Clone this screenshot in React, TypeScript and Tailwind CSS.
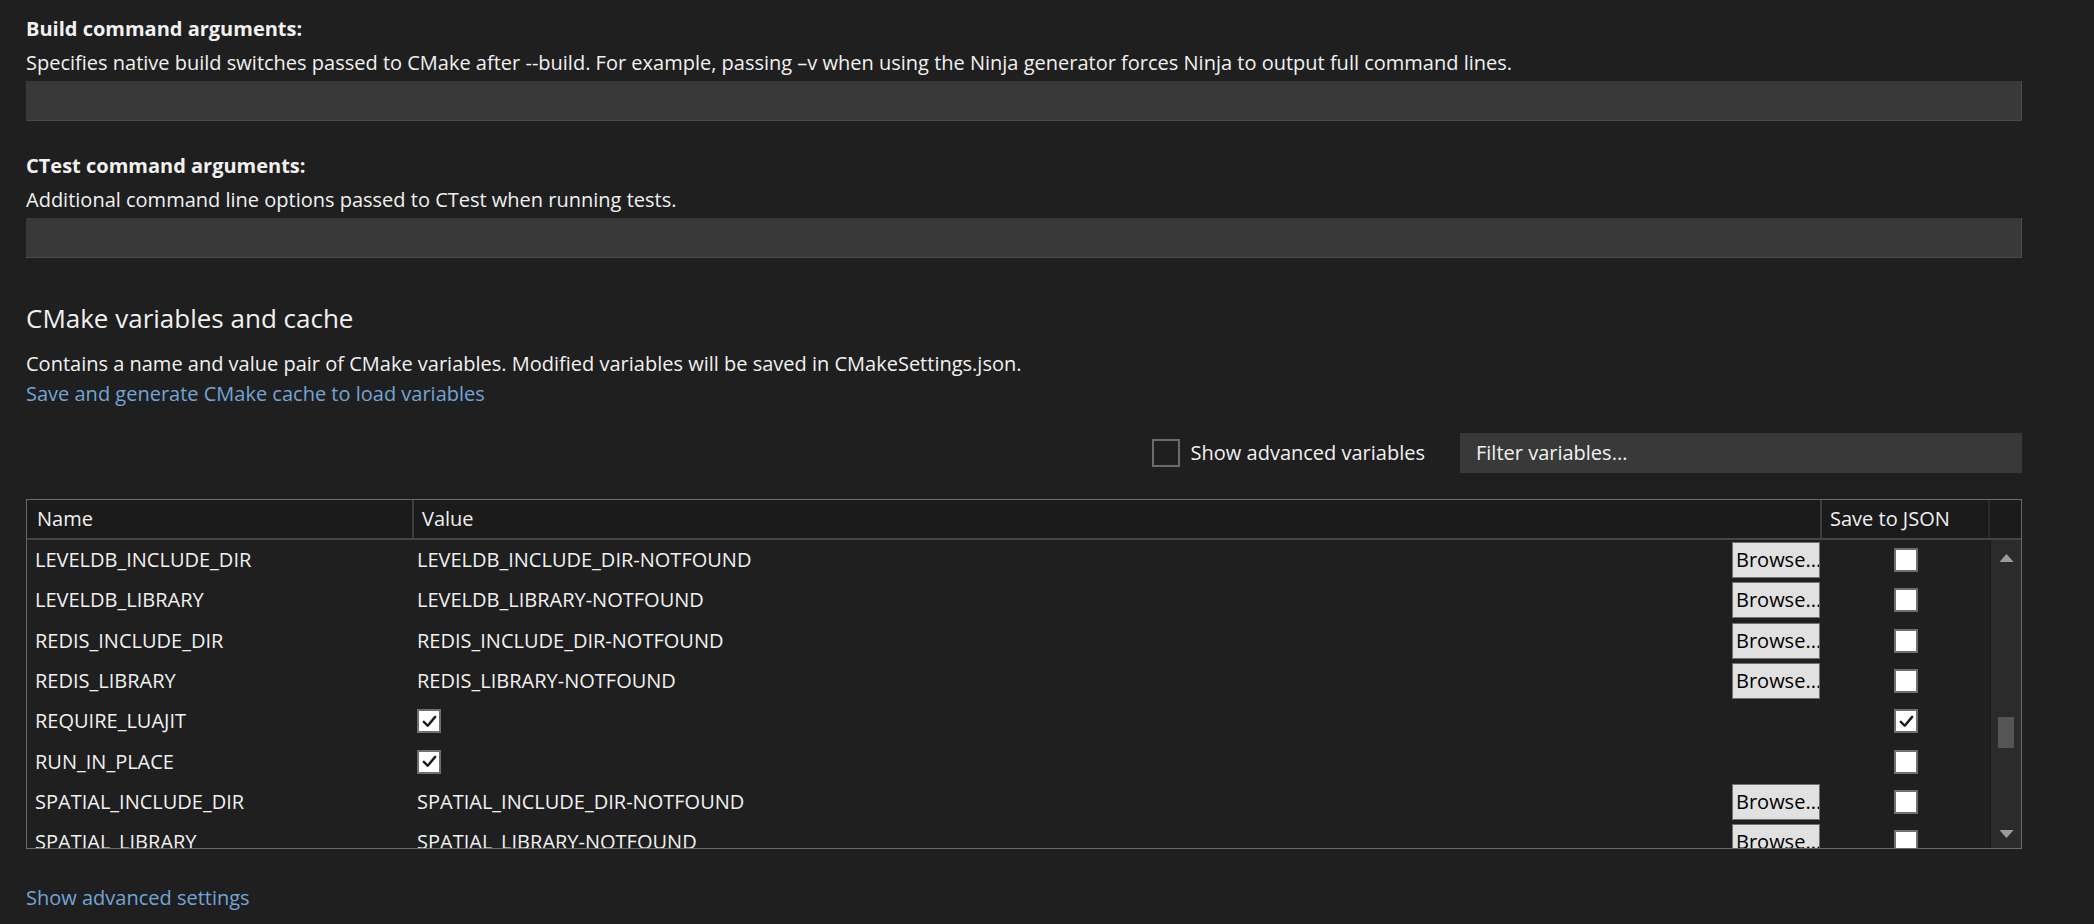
import React from "react";

type Row = {
  name: string;
  value?: string;
  bool?: boolean;
  save?: boolean;
};

const rows: Row[] = [
  { name: "LEVELDB_INCLUDE_DIR", value: "LEVELDB_INCLUDE_DIR-NOTFOUND" },
  { name: "LEVELDB_LIBRARY", value: "LEVELDB_LIBRARY-NOTFOUND" },
  { name: "REDIS_INCLUDE_DIR", value: "REDIS_INCLUDE_DIR-NOTFOUND" },
  { name: "REDIS_LIBRARY", value: "REDIS_LIBRARY-NOTFOUND" },
  { name: "REQUIRE_LUAJIT", bool: true, save: true },
  { name: "RUN_IN_PLACE", bool: true },
  { name: "SPATIAL_INCLUDE_DIR", value: "SPATIAL_INCLUDE_DIR-NOTFOUND" },
  { name: "SPATIAL_LIBRARY", value: "SPATIAL_LIBRARY-NOTFOUND" },
];

function Check() {
  return (
    <svg viewBox="0 0 24 24" className="w-[17px] h-[17px]">
      <path d="M4 12.5 L9.5 18 L20 5.5" fill="none" stroke="#1a1a1a" strokeWidth="3.4" strokeLinecap="round" strokeLinejoin="round" />
    </svg>
  );
}

function Box({ checked }: { checked?: boolean }) {
  return (
    <div className="w-[24px] h-[24px] bg-white border-2 border-[#6f6f6f] flex items-center justify-center">
      {checked && <Check />}
    </div>
  );
}

function Field() {
  return <div className="h-[40px] w-full bg-[#393939] border-b border-r border-[#4a4a4a]" />;
}

function Section({ title, desc }: { title: string; desc: string }) {
  return (
    <div>
      <div className="font-bold h-[28px] leading-[28px]">{title}</div>
      <div className="mt-[6px] h-[28px] leading-[28px]">{desc}</div>
      <div className="mt-[4px]">
        <Field />
      </div>
    </div>
  );
}

export default function App() {
  return (
    <div className="min-h-screen w-full bg-[#1f1f1f] text-[#f1f1f1] font-['Open_Sans','Noto_Sans',sans-serif] text-[20px] px-[26px] pt-[15px]">
      <div className="w-[1996px]">
        <Section
          title="Build command arguments:"
          desc="Specifies native build switches passed to CMake after --build. For example, passing –v when using the Ninja generator forces Ninja to output full command lines."
        />
        <div className="mt-[31px]">
          <Section
            title="CTest command arguments:"
            desc="Additional command line options passed to CTest when running tests."
          />
        </div>

        {/* CMAKE VARIABLES */}
        <div className="mt-[42px] text-[26px] h-[36px] leading-[36px]">CMake variables and cache</div>
        <div className="mt-[13px] h-[30px] leading-[30px]">
          Contains a name and value pair of CMake variables. Modified variables will be saved in CMakeSettings.json.
        </div>
        <div className="h-[30px] leading-[30px] text-[#71a5d8]">Save and generate CMake cache to load variables</div>

        <div className="mt-[24px] flex items-center justify-end">
          <div className="w-[28px] h-[28px] border-2 border-[#6b6b6b]" />
          <span className="ml-[11px]">Show advanced variables</span>
          <div className="ml-[35px] w-[562px] h-[40px] bg-[#393939] flex items-center px-[16px]">Filter variables...</div>
        </div>

        {/* TABLE */}
        <div className="mt-[26px] border border-[#686868] h-[350px] flex flex-col overflow-hidden">
          <div className="flex h-[40px] bg-[#1b1b1b] border-b-2 border-[#454545] shrink-0">
            <div className="w-[387px] border-r-2 border-[#3c3c3c] flex items-center pl-[10px]">Name</div>
            <div className="w-[1408px] border-r-2 border-[#3c3c3c] flex items-center pl-[8px]">Value</div>
            <div className="w-[168px] border-r-2 border-[#2a2a2a] flex items-center pl-[8px]">Save to JSON</div>
            <div className="flex-1" />
          </div>
          <div className="flex flex-1 min-h-0">
            <div className="flex-1 overflow-hidden">
              {rows.map((r) => (
                <div key={r.name} className="flex h-[40.3px] items-center">
                  <div className="w-[387px] pl-[8px] whitespace-nowrap">{r.name}</div>
                  <div className="w-[1408px] flex items-center pl-[3px]">
                    {r.bool ? (
                      <Box checked />
                    ) : (
                      <>
                        <span className="whitespace-nowrap">{r.value}</span>
                        <button className="ml-auto mr-[2px] w-[88px] h-[36px] bg-[#e1e1e1] border border-[#707070] text-black text-left pl-[3px] overflow-hidden whitespace-nowrap">
                          Browse...
                        </button>
                      </>
                    )}
                  </div>
                  <div className="w-[168px] flex justify-center">
                    <Box checked={r.save} />
                  </div>
                </div>
              ))}
            </div>
            <div className="w-[31px] bg-[#2b2b2b] border-l border-[#1a1a1a] flex flex-col items-center justify-between pt-[14px] pb-[10px]">
              <svg viewBox="0 0 16 9" className="w-[15px] h-[8px]">
                <path d="M0 9 L8 0 L16 9 Z" fill="#9a9a9a" />
              </svg>
              <div className="flex-1 w-full flex flex-col items-center pt-[155px]">
                <div className="w-[16px] h-[31px] bg-[#555555]" />
              </div>
              <svg viewBox="0 0 16 9" className="w-[15px] h-[8px]">
                <path d="M0 0 L16 0 L8 9 Z" fill="#9a9a9a" />
              </svg>
            </div>
          </div>
        </div>

        <div className="mt-[34px] h-[30px] leading-[30px] text-[#71a5d8]">Show advanced settings</div>
      </div>
    </div>
  );
}
